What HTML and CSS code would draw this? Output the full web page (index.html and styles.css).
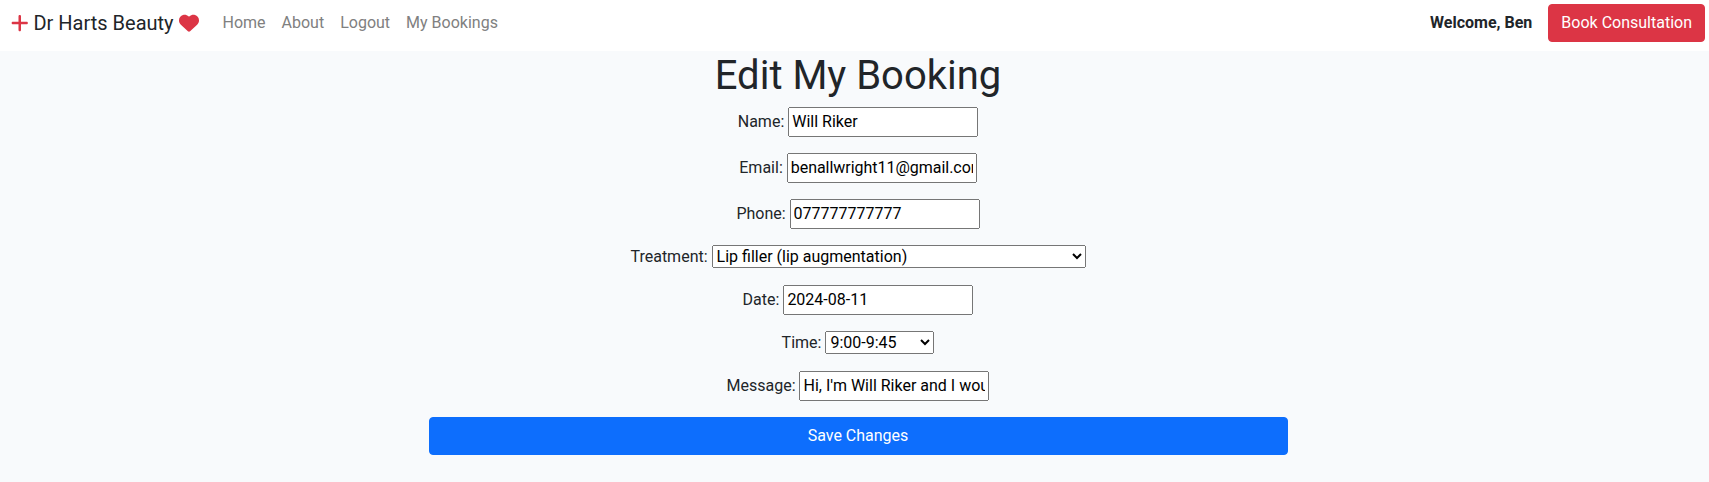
FILE: index.html
```html
<!DOCTYPE html>
<html lang="en">
<head>
<meta charset="utf-8">
<title>Edit My Booking</title>
<link rel="stylesheet" href="styles.css">
</head>
<body>
<nav class="navbar">
  <a class="brand" href="#"><svg class="plus" viewBox="0 0 448 512"><path d="M256 80c0-17.7-14.300-32-32-32s-32 14.300-32 32v144H48c-17.700 0-32 14.300-32 32s14.300 32 32 32h144v144c0 17.700 14.300 32 32 32s32-14.300 32-32V288h144c17.700 0 32-14.300 32-32s-14.300-32-32-32H256V80z"/></svg> Dr Harts Beauty <svg class="heart" viewBox="0 0 512 512"><path d="M47.600 300.400L228.300 469.100c7.500 7 17.400 10.900 27.700 10.900s20.200-3.900 27.700-10.900L464.400 300.400c30.400-28.300 47.600-68 47.600-109.500v-5.800c0-69.900-50.500-129.500-119.400-141C347 36.500 300.600 51.400 268 84L256 96 244 84c-32.600-32.600-79-47.500-124.600-39.900C50.500 55.600 0 115.200 0 185.100v5.800c0 41.500 17.200 81.200 47.600 109.500z"/></svg></a>
  <div class="links">
    <a href="#">Home</a>
    <a href="#">About</a>
    <a href="#">Logout</a>
    <a href="#">My Bookings</a>
  </div>
  <strong class="welcome">Welcome, Ben</strong>
  <a class="btn btn-danger" href="#">Book Consultation</a>
</nav>
<main class="content">
  <h1>Edit My Booking</h1>
  <form>
    <p><label for="name">Name:</label> <input id="name" type="text" value="Will Riker"></p>
    <p><label for="email">Email:</label> <input id="email" class="email" type="email" value="benallwright11@gmail.com"></p>
    <p><label for="phone">Phone:</label> <input id="phone" type="text" value="077777777777"></p>
    <p><label for="treatment">Treatment:</label> <select id="treatment" class="treatment"><option>Lip filler (lip augmentation)</option></select></p>
    <p><label for="date">Date:</label> <input id="date" type="text" value="2024-08-11"></p>
    <p><label for="time">Time:</label> <select id="time" class="time"><option>9:00-9:45</option></select></p>
    <p><label for="message">Message:</label> <input id="message" type="text" value="Hi, I'm Will Riker and I would like to book"></p>
    <button class="btn btn-primary" type="button">Save Changes</button>
  </form>
</main>
</body>
</html>
```

FILE: styles.css
```css
*, *::before, *::after {
  box-sizing: border-box;
}

body {
  margin: 0;
  min-height: 100vh;
  overflow: hidden;
  background: #f8fafc;
  color: #212529;
  font: 400 16px/24px Roboto, sans-serif;
}

a {
  color: inherit;
  text-decoration: none;
}

.navbar {
  display: flex;
  align-items: flex-start;
  height: 51px;
  padding: 4px 4px 0 11px;
  background: #fff;
}

.brand {
  margin-right: 16px;
  padding-top: 4px;
  font-size: 20px;
  line-height: 30px;
  white-space: nowrap;
}

.brand svg {
  height: 20px;
  overflow: visible;
  vertical-align: -2.5px;
  fill: #dc3545;
}

.plus {
  width: 17.5px;
}

.heart {
  width: 20px;
}

.links {
  display: flex;
  color: #808080;
}

.links a {
  padding: 7px 8px;
}

.welcome {
  margin: 7px 16px 0 auto;
  font-weight: 700;
}

.btn {
  padding: 6px 12px;
  border: 1px solid;
  border-radius: 4px;
  color: #fff;
  font: inherit;
  text-align: center;
}

.btn-danger {
  border-color: #dc3545;
  background: #dc3545;
}

.btn-primary {
  display: block;
  width: 100%;
  border-color: #0d6efd;
  background: #0d6efd;
}

.content {
  width: 859px;
  margin-left: 428.5px;
  text-align: center;
}

h1 {
  margin: 0 0 7px;
  padding-top: 1px;
  font-size: 40px;
  font-weight: 400;
  line-height: 48px;
}

p {
  margin: 0 0 16px;
}

input,
select {
  margin: 0;
  font: inherit;
}

input {
  width: 190px;
  height: 30px;
  padding: 0 2px 2px;
}

.email {
  letter-spacing: -0.03px;
}

select {
  height: 23px;
}

.treatment {
  width: 374px;
}

.time {
  width: 109px;
}
```
